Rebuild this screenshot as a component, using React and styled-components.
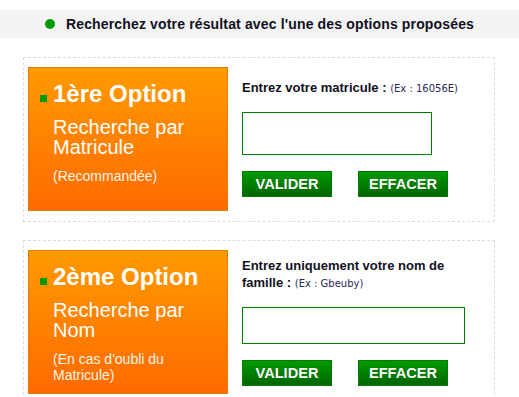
import React from "react";
import styled, { createGlobalStyle } from "styled-components";

const GlobalStyle = createGlobalStyle`
  body {
    margin: 0;
    background: #fff;
    font-family: "Liberation Sans", Arial, sans-serif;
  }
`;

const Page = styled.div`
  padding-top: 10px;
`;

const Header = styled.div`
  height: 28px;
  background: #f3f3f3;
  display: flex;
  align-items: center;
  justify-content: center;
  gap: 11px;
  font-size: 14px;
  font-weight: bold;
  letter-spacing: 0.15px;
  color: #111122;
`;

const Dot = styled.span`
  width: 10px;
  height: 10px;
  border-radius: 50%;
  background: #009900;
`;

const List = styled.div`
  padding: 19px 24px 0 23px;
  display: flex;
  flex-direction: column;
  gap: 18px;
`;

const Card = styled.div`
  border: 1px dashed #dedede;
  padding: 9px 10px 10px 4px;
  display: flex;
  align-items: flex-start;
  gap: 14px;
`;

const Panel = styled.div`
  width: 200px;
  height: 144px;
  flex-shrink: 0;
  box-sizing: border-box;
  border: 1px solid #f07a00;
  background: linear-gradient(#ff9a00, #ff6a00);
  padding: 12px 10px 10px 11px;
  color: #fff;
`;

const Title = styled.div`
  display: flex;
  align-items: flex-end;
  gap: 6px;
  font-size: 24px;
  font-weight: bold;
  line-height: 28px;
`;

const Bullet = styled.span`
  width: 7px;
  height: 7px;
  margin-bottom: 6px;
  background: #009900;
`;

const Desc = styled.div`
  margin: 9px 0 0 13px;
  font-size: 20px;
  line-height: 20px;
`;

const Note = styled.div`
  margin: 11px 0 0 13px;
  font-size: 14px;
  line-height: 16px;
  color: #fff4e6;
`;

const Form = styled.div`
  width: 232px;
  padding-top: ${({ $top }) => $top}px;
`;

const Label = styled.div`
  font-size: 13px;
  font-weight: bold;
  line-height: 17px;
  color: #111122;
`;

const Example = styled.span`
  font-family: "DejaVu Sans", Verdana, sans-serif;
  font-weight: normal;
  font-size: 10px;
  line-height: 12px;
  color: #2a2a55;
`;

const Field = styled.input`
  display: block;
  box-sizing: border-box;
  width: ${({ $w }) => $w}px;
  height: ${({ $h }) => $h}px;
  margin-top: 16px;
  border: 1px solid #008000;
  outline: none;
  background: #fff;
`;

const Buttons = styled.div`
  display: flex;
  gap: 26px;
  margin-top: 16px;
`;

const Button = styled.button`
  width: 90px;
  height: 26px;
  border: 1px solid #007a00;
  background: linear-gradient(#019a01, #006600);
  color: #fff;
  font-family: "Liberation Sans", Arial, sans-serif;
  font-size: 14.6px;
  font-weight: bold;
  text-shadow: 0 0 1px rgba(0, 0, 0, 0.3);
  padding: 0;
  cursor: pointer;
`;

const options = [
  {
    title: "1ère Option",
    desc: "Recherche par Matricule",
    note: "(Recommandée)",
    label: "Entrez votre matricule :",
    example: "(Ex : 16056E)",
    top: 12,
    w: 190,
    h: 43,
  },
  {
    title: "2ème Option",
    desc: "Recherche par Nom",
    note: "(En cas d'oubli du Matricule)",
    label: "Entrez uniquement votre nom de famille :",
    example: "(Ex : Gbeuby)",
    top: 7,
    w: 223,
    h: 37,
  },
];

const App = () => {
  return (
    <Page>
      <GlobalStyle />
      <Header>
        <Dot />
        Recherchez votre résultat avec l'une des options proposées
      </Header>
      <List>
        {options.map((o) => (
          <Card key={o.title}>
            <Panel>
              <Title>
                <Bullet />
                {o.title}
              </Title>
              <Desc>{o.desc}</Desc>
              <Note>{o.note}</Note>
            </Panel>
            <Form $top={o.top}>
              <Label>
                {o.label} <Example>{o.example}</Example>
              </Label>
              <Field type="text" $w={o.w} $h={o.h} />
              <Buttons>
                <Button>VALIDER</Button>
                <Button>EFFACER</Button>
              </Buttons>
            </Form>
          </Card>
        ))}
      </List>
    </Page>
  );
};

export default App;
